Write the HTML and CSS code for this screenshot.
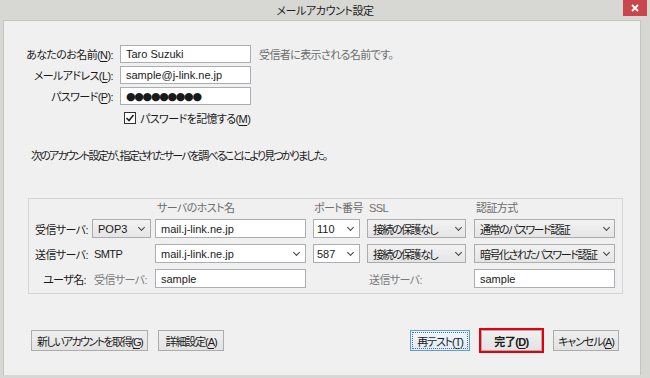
FILE: index.html
```html
<!DOCTYPE html>
<html lang="ja">
<head>
  <meta charset="UTF-8">
  <title>メールアカウント設定</title>
  <link rel="stylesheet" href="styles.css">
</head>
<body>

  <div class="window">
    <div class="titlebar">
      <span></span>
      <span class="title">メールアカウント設定</span>
      <span class="close-btn">
        <svg width="8" height="8" viewBox="0 0 8 8"><path d="M1 1L7 7M7 1L1 7" stroke="#fff" stroke-width="1.8"/></svg>
      </span>
    </div>

    <div class="client">
      <div class="account-form">
        <span class="field-label">あなたのお名前(<u>N</u>):</span>
        <div class="textbox">Taro Suzuki</div>
        <span class="hint">受信者に表示される名前です。</span>

        <span class="field-label">メールアドレス(<u>L</u>):</span>
        <div class="textbox">sample@j-link.ne.jp</div>
        <span></span>

        <span class="field-label">パスワード(<u>P</u>):</span>
        <div class="textbox password">●●●●●●●●●</div>
        <span></span>
      </div>

      <div class="remember">
        <span class="checkbox">
          <svg width="10" height="10" viewBox="0 0 10 10"><path d="M1.5 5L4 7.5L8.5 2" fill="none" stroke="#222" stroke-width="1.6"/></svg>
        </span>
        <span>パスワードを記憶する(<u>M</u>)</span>
      </div>

      <p class="message">次のアカウント設定が、指定されたサーバを調べることにより見つかりました。</p>

      <div class="server-box">
        <span></span>
        <span></span>
        <span class="col-head">サーバのホスト名</span>
        <span class="col-head port-head">ポート番号</span>
        <span class="col-head">SSL</span>
        <span class="col-head">認証方式</span>

        <span class="row-label">受信サーバ:</span>
        <div class="combo list w-proto"><span>POP3</span><i class="chevron"></i></div>
        <div class="textbox w-host">mail.j-link.ne.jp</div>
        <div class="combo edit w-port"><span>110</span><i class="chevron"></i></div>
        <div class="combo list w-ssl"><span>接続の保護なし</span><i class="chevron"></i></div>
        <div class="combo list w-auth"><span>通常のパスワード認証</span><i class="chevron"></i></div>

        <span class="row-label">送信サーバ:</span>
        <span class="plain">SMTP</span>
        <div class="combo edit w-host"><span>mail.j-link.ne.jp</span><i class="chevron"></i></div>
        <div class="combo edit w-port"><span>587</span><i class="chevron"></i></div>
        <div class="combo list w-ssl"><span>接続の保護なし</span><i class="chevron"></i></div>
        <div class="combo list w-auth"><span>暗号化されたパスワード認証</span><i class="chevron"></i></div>

        <span class="row-label">ユーザ名:</span>
        <span class="plain muted">受信サーバ:</span>
        <div class="textbox w-host">sample</div>
        <span></span>
        <span class="plain muted">送信サーバ:</span>
        <div class="textbox w-auth">sample</div>
      </div>

      <div class="actions">
        <div class="btn-group">
          <button class="btn w-new">新しいアカウントを取得(<u>G</u>)</button>
          <button class="btn w-adv">詳細設定(<u>A</u>)</button>
        </div>
        <div class="btn-group">
          <button class="btn focused w-retest">再テスト(<u>T</u>)</button>
          <div class="highlight">
            <button class="btn done w-done">完了(<u>D</u>)</button>
          </div>
          <button class="btn w-cancel">キャンセル(<u>A</u>)</button>
        </div>
      </div>
    </div>
  </div>

</body>
</html>
```

FILE: styles.css
```css
body {
  margin: 0;
  width: 650px;
  height: 378px;
  overflow: hidden;
  background-color: #d7d7d4;
  font-family: "Liberation Sans", "Noto Sans CJK JP", sans-serif;
  font-feature-settings: "palt";
  font-size: 11px;
  letter-spacing: -0.6px;
  color: #1a1a1a;
}

u {
  text-decoration-thickness: 1px;
  text-underline-offset: 2px;
}

.window {
  display: flex;
  flex-direction: column;
}

/* title bar */
.titlebar {
  height: 20px;
  display: grid;
  grid-template-columns: 1fr auto 1fr;
  align-items: start;
}

.title {
  line-height: 22px;
  letter-spacing: -0.4px;
  color: #222;
}

.close-btn {
  justify-self: end;
  margin-right: 3px;
  width: 24px;
  height: 16px;
  background-color: #c9474c;
  display: flex;
  align-items: center;
  justify-content: center;
}

/* client area */
.client {
  box-sizing: border-box;
  margin-left: 3px;
  width: 638px;
  height: 355px;
  background-color: #f0f0f0;
  border: 1px solid #c4c4c2;
  border-bottom: none;
}

.account-form {
  margin-top: 24px;
  display: grid;
  grid-template-columns: 109px 131px auto;
  grid-auto-rows: 18px;
  column-gap: 7px;
  row-gap: 3px;
  align-items: center;
}

.field-label {
  text-align: right;
  white-space: nowrap;
}

.hint {
  margin-left: 1px;
  color: #6d6d6d;
}

.textbox {
  box-sizing: border-box;
  height: 100%;
  background-color: #fff;
  border: 1px solid #abadb3;
  padding: 0 5px;
  display: flex;
  align-items: center;
  white-space: nowrap;
  letter-spacing: 0;
}

.password {
  font-family: "DejaVu Sans", sans-serif;
  font-size: 11px;
  letter-spacing: -1.3px;
}

.remember {
  margin: 6px 0 0 120px;
  height: 14px;
  display: flex;
  align-items: center;
  gap: 4px;
}

.checkbox {
  box-sizing: border-box;
  width: 12px;
  height: 12px;
  border: 1px solid #333;
  background-color: #fff;
  display: flex;
  align-items: center;
  justify-content: center;
}

.message {
  margin: 24px 0 0;
  padding-left: 27px;
  line-height: 14px;
  letter-spacing: -1.8px;
}

/* server settings group */
.server-box {
  box-sizing: border-box;
  margin: 35px 0 0 24px;
  width: 595px;
  height: 96px;
  border: 1px solid #d5d5d5;
  padding: 0 0 0 6px;
  display: grid;
  grid-template-columns: 57px 63px 158px 54px 107px 141px;
  grid-template-rows: 14px 19px 19px 19px;
  row-gap: 6px;
  align-items: center;
}

.col-head {
  align-self: end;
  line-height: 10px;
  padding-left: 2px;
  color: #6d6d6d;
  white-space: nowrap;
}

.port-head {
  padding-left: 1px;
}

.row-label {
  text-align: right;
  padding-right: 6px;
  white-space: nowrap;
}

.plain {
  padding-left: 2px;
  white-space: nowrap;
}

.muted {
  color: #7a7a7a;
}

.combo {
  box-sizing: border-box;
  height: 100%;
  display: flex;
  align-items: center;
  justify-content: space-between;
  padding: 0 6px 0 5px;
  white-space: nowrap;
}

.combo.list {
  background: linear-gradient(#f2f2f2, #e5e5e5);
  border: 1px solid #acacac;
  letter-spacing: -1.5px;
}

.combo.edit {
  background-color: #fff;
  border: 1px solid #abadb3;
  letter-spacing: 0;
}

.w-proto { width: 59px; letter-spacing: 0 !important; }
.w-host { width: 151px; }
.w-port { width: 47px; padding-left: 3px; }
.w-ssl { width: 99px; padding-right: 4px; }
.w-auth { width: 141px; padding-right: 5px; }

.chevron {
  flex: none;
  width: 4px;
  height: 4px;
  margin-top: -3px;
  border-right: 1.2px solid #444;
  border-bottom: 1.2px solid #444;
  transform: rotate(45deg);
}

/* bottom buttons */
.actions {
  margin-top: 34px;
  padding: 0 21px 0 27px;
  display: flex;
  justify-content: space-between;
  align-items: center;
}

.btn-group {
  display: flex;
  align-items: center;
  gap: 9px;
}

.btn-group:first-child {
  gap: 10px;
}

.btn {
  box-sizing: border-box;
  height: 21px;
  padding: 0;
  font: inherit;
  letter-spacing: -1.1px;
  color: #1a1a1a;
  background: linear-gradient(#efefef, #e3e3e3);
  border: 1px solid #acacac;
  white-space: nowrap;
}

.btn.focused {
  border-color: #5a9de0;
  background: linear-gradient(#eef5fc, #e1ecf7);
  outline: 1px dotted #6a6a6a;
  outline-offset: -3px;
}

.btn.done {
  font-weight: bold;
  letter-spacing: -0.6px;
}

.highlight {
  border: 2px solid #e6000f;
  display: flex;
}

.w-new { width: 117px; letter-spacing: -1.6px; }
.w-adv { width: 66px; }
.w-retest { width: 60px; }
.w-done { width: 61px; }
.w-cancel { width: 66px; }
```
